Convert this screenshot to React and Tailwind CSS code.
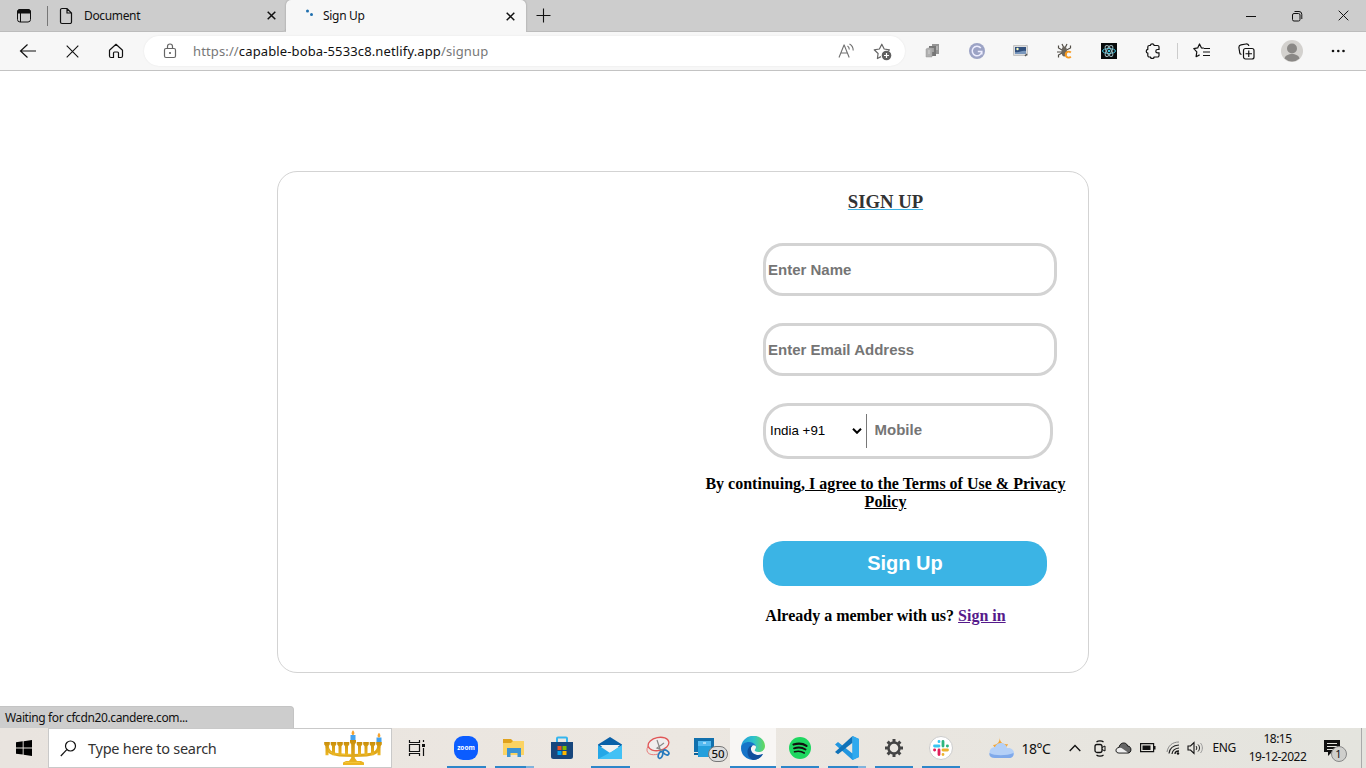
import React from "react";

const Ic = ({ s = 20, w, h, vb, children, className = "" }) => (
  <svg
    width={w || s}
    height={h || s}
    viewBox={vb || `0 0 ${w || s} ${h || s}`}
    fill="none"
    stroke="none"
    className={`block shrink-0 ${className}`}
  >
    {children}
  </svg>
);

const Slot = ({ className = "", children }) => (
  <div className={`flex shrink-0 items-center justify-center ${className}`}>{children}</div>
);

const Cross = ({ s = 9, sw = 1.5 }) => (
  <Ic s={s}>
    <path d={`M.7 .7L${s - 0.7} ${s - 0.7}M${s - 0.7} .7L.7 ${s - 0.7}`} stroke="#111" strokeWidth={sw} />
  </Ic>
);

function TabStrip() {
  return (
    <div className="flex h-8 bg-[#cdcdcd] text-[12px] text-[#111]">
      <div className="flex h-8 w-[286px] items-center rounded-br-[4px] border-b border-[#bcbcbc]">
        <Ic w={16} h={16} className="mt-px ml-4">
          <rect x="1.5" y="1.5" width="13" height="12.5" rx="2.5" stroke="#111" />
          <path d="M1.5 5V4a2.5 2.5 0 0 1 2.5-2.5h8A2.5 2.5 0 0 1 14.500 4v1z" fill="#111" stroke="#111" />
          <path d="M4.500 5v9" stroke="#111" />
        </Ic>
        <div className="ml-[15px] h-5 w-px bg-[#777]" />
        <Ic w={14} h={18} className="ml-[11px]">
          <path d="M1.500 3a1.500 1.500 0 0 1 1.500-1.500h5L12.500 6v9a1.500 1.500 0 0 1-1.500 1.500H3A1.500 1.500 0 0 1 1.500 15zM8 1.500V6h4.500" stroke="#111" strokeWidth="1.200" />
        </Ic>
        <span className="ml-[11px] w-[183px] leading-4 tracking-[-0.350px]">Document</span>
        <Cross />
      </div>
      <div className="flex h-8 w-60 items-center rounded-t-[5px] bg-[#f7f7f7] shadow-[0_0_2px_rgba(0,0,0,0.3)]">
        <Ic w={12} h={16} className="mb-[3px] ml-[17px]">
          <circle cx="4.500" cy="4" r="1.500" fill="#1f6fae" />
          <circle cx="8.500" cy="7.500" r="1.500" fill="#1f6fae" />
        </Ic>
        <span className="ml-[8px] w-[183px] leading-4 tracking-[-0.300px]">Sign Up</span>
        <Cross />
      </div>
      <div className="flex h-8 flex-1 items-center border-b border-[#bcbcbc]">
        <Ic w={15} h={15} className="ml-[10px]">
          <path d="M7.500 .5v14M.5 7.500h14" stroke="#111" strokeWidth="1.100" />
        </Ic>
        <div className="ml-auto flex">
          <Slot className="w-[46px]">
            <Ic s={10}><path d="M0 5.500h10" stroke="#111" /></Ic>
          </Slot>
          <Slot className="w-[46px]">
            <Ic s={12}>
              <rect x="1.500" y="3.500" width="7.500" height="7.500" rx="1.500" stroke="#111" />
              <path d="M3.500 1.500H8A2.800 2.800 0 0 1 10.800 4.300V9" stroke="#111" />
            </Ic>
          </Slot>
          <Slot className="w-[46px]"><Cross s={11} sw={1} /></Slot>
        </div>
      </div>
    </div>
  );
}

function Toolbar() {
  return (
    <div className="flex h-[39px] items-center border-b border-[#c3c3c3] bg-[#f7f7f7] pl-1.5">
      <Slot className="w-11">
        <Ic w={18} h={16}><path d="M8.500 1.500L1.500 8l7 6.500M1.500 8H17" stroke="#111" strokeWidth="1.200" /></Ic>
      </Slot>
      <Slot className="w-11"><Cross s={13} sw={1.1} /></Slot>
      <Slot className="w-11">
        <Ic s={16}>
          <path d="M1.500 7.200L8 1.300l6.500 5.900V13a1.500 1.500 0 0 1-1.500 1.500h-2.500V10a1 1 0 0 0-1-1h-3a1 1 0 0 0-1 1v4.500H3A1.500 1.500 0 0 1 1.500 13z" stroke="#111" strokeWidth="1.200" strokeLinejoin="round" />
        </Ic>
      </Slot>
      <div className="ml-1.5 flex h-[30px] w-[761px] items-center rounded-full bg-white shadow-[0_0_2px_rgba(0,0,0,0.08)]">
        <Ic w={14} h={16} className="ml-[19px]">
          <rect x="1.500" y="5.500" width="11" height="9" rx="1.500" stroke="#666" strokeWidth="1.200" />
          <path d="M4.500 5.500v-2a2.500 2.500 0 0 1 5 0v2" stroke="#666" strokeWidth="1.200" />
          <circle cx="7" cy="10" r="1" fill="#555" />
        </Ic>
        <span className="ml-4 w-[645px] whitespace-nowrap text-[13px] leading-5 tracking-[0.130px] text-[#777]">
          https://<span className="text-[#111]">capable-boba-5533c8.netlify.app</span>/signup
        </span>
        <Ic w={17} h={16}>
          <path d="M1 14.500L6 2h.2l5 12.500M2.800 10h6.600" stroke="#707070" strokeWidth="1.100" />
          <path d="M9.500 3c1.300.8 1.800 2 1.800 3.600M11.500 1c2.300 1.200 3.700 3.400 3.700 6.600" stroke="#707070" strokeWidth="1.100" />
        </Ic>
        <Ic w={19} h={19} className="ml-[18px]">
          <path d="M8 14.600L4.400 16.500l.7-5L1.200 7.800l5.200-.8L8.800 2.200 11.200 7l5.200.8-1.200 1.200" stroke="#666" strokeWidth="1.200" strokeLinejoin="round" />
          <circle cx="13.500" cy="13.500" r="4.800" fill="#606060" />
          <path d="M13.500 11v5M11 13.500h5" stroke="#fff" strokeWidth="1.200" />
        </Ic>
      </div>
      <Slot className="ml-1.5 w-11">
        <Ic s={16}>
          <path d="M7 1h7v10H7z" fill="#969696" /><path d="M4 3h7v10H4z" fill="#777" />
          <path d="M1 6l2-1h4v9H1z" fill="#b0b0b0" stroke="#999" strokeWidth=".5" />
          <path d="M4 7v4M8 5v4M12 3v4" stroke="#ddd" strokeWidth=".8" />
        </Ic>
      </Slot>
      <Slot className="w-11">
        <Ic s={16}>
          <circle cx="8" cy="8" r="8" fill="#9ca3c5" />
          <path d="M11.800 5a4.800 4.800 0 1 0 1 3.500H8.800M12.800 8.500v3" stroke="#eef" strokeWidth="1.500" />
        </Ic>
      </Slot>
      <Slot className="w-11">
        <Ic w={16} h={14}>
          <path d="M.5 1.500h14v10H.5z" fill="#ddd" stroke="#c4c4c4" />
          <path d="M2 3h11v7H2z" fill="#31507e" /><path d="M2 8c4 1 7-2 11-1v3H2z" fill="#7997bd" />
          <circle cx="4.500" cy="5" r="1.200" fill="#ffb" /><path d="M12 12l2-2" stroke="#555" strokeWidth="1.500" />
        </Ic>
      </Slot>
      <Slot className="w-11">
        <Ic s={16}>
          <path d="M5 1l1.500 3M10 1L8.500 4M1.500 2.500v2.500L5 7M13.500 2.500V5L9.500 7M0 9h5M1.500 14.500V12L5 10M9 8.500h4" stroke="#514d46" strokeWidth="1.200" />
          <ellipse cx="7.300" cy="8.500" rx="2.700" ry="5" fill="#6a655d" />
          <path d="M13.800 9.500a3 3 0 1 0 0 4.200" stroke="#f99a1d" strokeWidth="1.900" />
        </Ic>
      </Slot>
      <Slot className="w-11">
        <Ic s={16}>
          <path d="M0 0h16v16H0z" fill="#080b0c" />
          <g strokeWidth="1">
            <ellipse cx="8" cy="8" rx="6.500" ry="2.500" stroke="#3cc3df" />
            <ellipse cx="8" cy="8" rx="6" ry="2.500" stroke="#9fb8bd" transform="rotate(60 8 8)" />
            <ellipse cx="8" cy="8" rx="6" ry="2.500" stroke="#9fb8bd" transform="rotate(120 8 8)" />
          </g>
          <circle cx="8" cy="8" r="1.300" fill="#3cc3df" />
        </Ic>
      </Slot>
      <Slot className="w-11">
        <Ic s={16}>
          <path d="M5.300 2.500A2 2 0 0 1 9.200 2.500H12.500a1.500 1.500 0 0 1 1.500 1.500v2.500H12.500a1.700 1.700 0 0 0 0 3.400H14V12.500a1.500 1.500 0 0 1-1.500 1.500H9.200a2 2 0 0 1-3.900 0H4.300A1.500 1.500 0 0 1 2.800 12.500V10.200a2 2 0 0 1 0-3.900V4a1.500 1.500 0 0 1 1.500-1.500z" stroke="#111" strokeWidth="1.200" />
        </Ic>
      </Slot>
      <div className="ml-[2px] h-4 w-px bg-[#ccc]" />
      <Slot className="ml-[2px] w-11">
        <Ic w={18} h={16}>
          <path d="M10.800 5.200L8.500 4.900 6.500 1 4.700 4.900.8 5.700l3 3.200-.7 4.800 3.500-1.800M11 5.500h6M10 9h7M10 12.500h7" stroke="#111" strokeWidth="1.200" strokeLinejoin="round" />
        </Ic>
      </Slot>
      <Slot className="w-11">
        <Ic w={17} h={17}>
          <path d="M3.500 11.500A2.500 2.500 0 0 1 1.600 9L.9 4.500A2.500 2.500 0 0 1 3 1.900L8 1a2.500 2.500 0 0 1 2.900 2" stroke="#111" strokeWidth="1.200" />
          <rect x="5.500" y="5.500" width="10.500" height="10.500" rx="2" fill="#f7f7f7" stroke="#111" strokeWidth="1.200" />
          <path d="M10.750 7.500v6.500M7.500 10.750H14" stroke="#111" strokeWidth="1.200" />
        </Ic>
      </Slot>
      <Slot className="ml-[2px] w-11">
        <Ic s={22}>
          <circle cx="11" cy="11" r="11" fill="#d3d1ce" />
          <circle cx="11" cy="8.500" r="5" fill="#8a8886" />
          <path d="M3.500 18.500c1-6 14-6 15 0A11 11 0 0 1 3.500 18.500z" fill="#8a8886" />
        </Ic>
      </Slot>
      <Slot className="ml-[2px] w-11">
        <Ic w={14} h={4}><g fill="#111"><circle cx="2" cy="2" r="1.300" /><circle cx="7.300" cy="2" r="1.300" /><circle cx="12.500" cy="2" r="1.300" /></g></Ic>
      </Slot>
    </div>
  );
}

function SignUpCard() {
  const field =
    "block h-[53px] w-[294px] rounded-[20px] border-[3px] border-[#d3d3d3] bg-white px-[2px] font-['Liberation_Sans',Arial,sans-serif] text-[15px] font-bold placeholder:text-[#757575]";
  return (
    <main className="flex h-[657px] flex-col bg-white pt-[100px] font-['Liberation_Serif',serif]">
      <section className="ml-[277px] flex h-[502px] w-[812px] justify-end rounded-[20px] border border-[#d3d3d3]">
        <form className="w-[405px]">
          <h1 className="mt-[18px] text-center text-[18.700px] leading-6 font-bold text-[#333] underline decoration-[#3bb4e5] decoration-1">SIGN UP</h1>
          <div className="mt-[29px] ml-[80px] flex flex-col gap-[27px]">
            <input className={field} placeholder="Enter Name" />
            <input className={field} placeholder="Enter Email Address" />
            <div className="flex h-[56px] w-[290px] items-center rounded-[25px] border-[3px] border-[#d3d3d3] font-['Liberation_Sans',Arial,sans-serif]">
              <div className="flex h-[34px] w-[101px] items-center justify-between border-r border-[#777] pr-1 pl-1 text-[13.333px] text-black">
                India +91
                <Ic w={10} h={6}><path d="M1 .8l4 4 4-4" stroke="#000" strokeWidth="2" /></Ic>
              </div>
              <input className="mb-[2px] w-40 pl-[7.5px] text-[15px] font-bold placeholder:text-[#757575]" placeholder="Mobile" />
            </div>
          </div>
          <p className="mt-[16px] text-center text-[16px] leading-[18px] font-bold whitespace-nowrap text-black">
            By continuing<span className="underline">, I agree to the Terms of Use &amp; Privacy<br />Policy</span>
          </p>
          <button type="button" className="mt-[30px] ml-[80px] block h-[45px] w-[284px] rounded-[20px] bg-[#3bb4e5] pb-[2px] font-['Liberation_Sans',Arial,sans-serif] text-[20px] font-bold text-white">Sign Up</button>
          <p className="mt-[21px] text-center text-[16px] leading-[18px] font-bold text-black">
            Already a member with us? <a className="text-[#551a8b] underline">Sign in</a>
          </p>
        </form>
      </section>
      <div className="mt-auto flex h-[22px] w-[294px] items-center rounded-tr-[4px] border-t border-r border-[#c4c4c4] bg-[#cdcdcd] pl-[5px] font-['Noto_Sans',sans-serif] text-[12px] text-[#111]">
        <span className="tracking-[-0.380px] whitespace-nowrap">Waiting for cfcdn20.candere.com...</span>
      </div>
    </main>
  );
}

const Task = ({ className = "w-12", bar = "", children }) => (
  <div className={`flex h-10 shrink-0 flex-col items-center ${className}`}>
    <div className="flex h-[38px] items-center justify-center pt-[2px]">{children}</div>
    <div className={`h-[2px] ${bar}`} />
  </div>
);

function Menorah() {
  return (
    <Ic w={58} h={36}>
      <defs>
        <linearGradient id="gold" x1="0" x2="0" y1="0" y2="1"><stop stopColor="#c98e0b" /><stop offset="1" stopColor="#eeb824" /></linearGradient>
      </defs>
      <path d="M3 14c0 9 4 11.500 26 11.500S55 23 55 14" stroke="#dfa81a" strokeWidth="3.200" />
      <path d="M3.500 17c1 6 4 7.500 25.500 7.500" stroke="#f3c638" />
      <g fill="url(#gold)">
        {[3, 9.5, 16, 22.5, 35.5, 42, 48.5, 55].map((x) => <path key={x} d={`M${x - 2.8} 12h5.600v2.500l-1.300 1.800v9h-3v-9l-1.300-1.800z`} />)}
        <path d="M26 10h6v2.500l-1.200 2V28l2.200 3h4l3 1.500V35H19v-2.500L22 31h3l2.200-3V14.500L26 12.500z" />
      </g>
      <path d="M21 32.500h15" stroke="#f3c638" />
      <path d="M26.500 5h5v5h-5zM52.500 7.500h5v4.500h-5z" fill="#45a2ed" />
      <path d="M29 .2c2.600 3 1 4.800 0 4.800s-2.600-2 0-4.800zM55 2.700c2.600 3 1 4.800 0 4.800s-2.600-2 0-4.800z" fill="#f6a32f" />
    </Ic>
  );
}

function Taskbar() {
  return (
    <footer className="flex h-10 items-center bg-linear-to-r from-[#e9e4df] via-[#ece7e1] to-[#e4e4de] text-[#111]">
      <Slot className="w-12">
        <Ic s={16}><path d="M0 2.300L6.700 1.300v6.200H0zM7.600 1.200L16 0v7.500H7.600zM0 8.400h6.700v6.200L0 13.700zM7.600 8.400H16V16l-8.400-1.200z" fill="#000" /></Ic>
      </Slot>
      <div className="flex h-10 w-[344px] items-center border border-[#c9c9c9] bg-white">
        <Ic w={17} h={17} className="ml-[11px]"><circle cx="10.500" cy="6" r="5" stroke="#111" strokeWidth="1.200" /><path d="M6.800 9.700L.8 16" stroke="#111" strokeWidth="1.200" /></Ic>
        <span className="mt-px ml-[11px] w-[236px] text-[14.500px] tracking-[-0.260px] whitespace-nowrap text-[#333]">Type here to search</span>
        <Menorah />
      </div>
      <Slot className="w-[50px]">
        <Ic w={18} h={16}>
          <path d="M1.500 0v2.500h10V0M1.500 16v-2.500h10V16M1.500 4.500h10v7h-10zM15.500 0v2M15.500 8v8" stroke="#111" strokeWidth="1.200" />
          <path d="M14 4h3v3h-3z" fill="#111" />
        </Ic>
      </Slot>
      <Task bar="w-[39px] bg-[#2e86c9]">
        <Ic s={24}>
          <rect width="24" height="24" rx="9" fill="#0b5cff" />
          <text x="12" y="14" textAnchor="middle" fontFamily="Open Sans, sans-serif" fontWeight="700" fontSize="6.500" fill="#fff">zoom</text>
        </Ic>
      </Task>
      <Task bar="w-[39px] bg-linear-to-r from-[#2e86c9] from-80% to-[#7fb3dd] to-80%">
        <Ic w={22} h={20}>
          <path d="M0 1h8l2 2h10a1 1 0 0 1 1 1v13H0z" fill="#e0a21c" />
          <path d="M0 5h8l2-2h11v14H0z" fill="#fbd362" />
          <path d="M4 19v-9h14v9h-3.500v-4h-7v4z" fill="#3c93d4" />
        </Ic>
      </Task>
      <Task>
        <Ic w={24} h={24}>
          <path d="M7 7V2.500a1 1 0 0 1 1-1h8a1 1 0 0 1 1 1V7" stroke="#35b5ee" strokeWidth="2" />
          <path d="M1 6h22v14.500a2.500 2.500 0 0 1-2.500 2.500h-17A2.500 2.500 0 0 1 1 20.500z" fill="#17467c" />
          <path d="M7.500 10H11.500v4H7.500z" fill="#f25022" /><path d="M12.500 10h4v4h-4z" fill="#7fba00" />
          <path d="M7.500 15h4v4h-4z" fill="#00a4ef" /><path d="M12.500 15h4v4h-4z" fill="#ffb900" />
        </Ic>
      </Task>
      <Task bar="w-[39px] bg-[#2e86c9]">
        <Ic w={24} h={22}>
          <path d="M0 7.500L12 0l12 7.500V10H0z" fill="#0960a8" />
          <path d="M2 8h20l-9 8h-2z" fill="#f1f1f1" />
          <path d="M0 8l12 8 12-8v14H0z" fill="#24a7e7" /><path d="M0 22L15 14l9-6v14z" fill="#42c1f5" />
        </Ic>
      </Task>
      <Task>
        <Ic w={24} h={24}>
          <ellipse cx="12.500" cy="8" rx="10.500" ry="6.500" transform="rotate(-12 12.500 8)" fill="#f0eeee" stroke="#e05656" strokeWidth="1.300" />
          <path d="M2 10c-4 8 4 10 10 8" stroke="#e87c7c" />
          <path d="M11 4l4 12M18 7l-7 5 7 3" stroke="#888" strokeWidth="1.200" />
          <ellipse cx="14.500" cy="19" rx="2" ry="3.500" transform="rotate(20 14.500 19)" stroke="#2679bd" strokeWidth="1.700" />
          <ellipse cx="20" cy="16.500" rx="3.200" ry="2" transform="rotate(35 20 16.500)" stroke="#2679bd" strokeWidth="1.700" />
        </Ic>
      </Task>
      <Task>
        <div className="relative h-6 w-6">
          <Ic s={24}>
            <path d="M0 2h2v0h18v14H0z" fill="#1170ad" /><path d="M0 17h16v4H4v-2H0z" fill="#0b6199" />
            <rect x="4" y="5" width="13" height="16" rx="1" fill="#249fdc" /><path d="M4 5h13v5H4z" fill="#55baf0" /><path d="M9 7h3" stroke="#fff" />
          </Ic>
          <span className="absolute top-[10px] left-[14px] flex h-[16px] w-[20px] items-center justify-center rounded-full border border-[#777] bg-[#dcdcdc] text-[11.500px] font-medium">50</span>
        </div>
      </Task>
      <Task className="w-[46px] bg-[#f8f6f4]" bar="w-full bg-[#2e86c9]">
        <Ic s={24}>
          <defs>
            <linearGradient id="edgeTop" x1="0" x2="1"><stop stopColor="#239bdc" /><stop offset=".55" stopColor="#30c4c9" /><stop offset="1" stopColor="#66d957" /></linearGradient>
          </defs>
          <path d="M0 12C1-4 23-4 24 10c0 6-7 7-10 5-1-1 1-2 1-4C14 6 4 5 0 12z" fill="url(#edgeTop)" />
          <path d="M0 12C1 5 12 4 15 10c-4-2-6 1-5 4 1 5 8 6 12 4-3 5-8 7-13 5.500C4 22 0 18 0 12z" fill="#1674c8" />
          <path d="M9 10c-5 5-2 12.500 3 13.900C18 24 21 20 22 18c-5 2-11 1-12-4-.5-2 .5-4 2-4.500z" fill="#0f4f9c" />
        </Ic>
      </Task>
      <Task className="ml-[0.5px] w-[47px]" bar="w-[38px] bg-[#2e86c9]">
        <Ic s={22}>
          <circle cx="11" cy="11" r="11" fill="#1ed760" />
          <g stroke="#111" strokeLinecap="round"><path d="M4.500 7.500c5-1.500 9.500-1 13 1.300" strokeWidth="2.200" /><path d="M5 11.300c4-1.300 8.500-.8 11.500 1.200" strokeWidth="1.900" /><path d="M5.500 14.800c3.500-1 7-.6 9.800 1.200" strokeWidth="1.500" /></g>
        </Ic>
      </Task>
      <Task className="w-[47px]" bar="w-[38px] bg-linear-to-r from-[#2e86c9] from-80% to-[#7fb3dd] to-80%">
        <Ic s={24}>
          <path d="M17.500 0L24 3v18l-6.500 3L0 8.500 3 6l14.500 11.500z" fill="#2196e0" />
          <path d="M17.500 0v6.800L3 18.300 0 16z" fill="#1072b8" />
          <path d="M17.500 0L24 3v18l-6.500 3z" fill="#2fa9ee" />
        </Ic>
      </Task>
      <Task className="w-[47px]" bar="w-[38px] bg-[#2e86c9]">
        <Ic s={20}>
          <circle cx="10" cy="10" r="5.500" stroke="#444" strokeWidth="2.500" />
          {[0, 45, 90, 135, 180, 225, 270, 315].map((a) => <path key={a} d="M10 4V1" stroke="#444" strokeWidth="3" transform={`rotate(${a} 10 10)`} />)}
        </Ic>
      </Task>
      <Task className="w-[47px]" bar="w-[38px] bg-[#2e86c9]">
        <Ic s={24}>
          <circle cx="12" cy="12" r="11.500" fill="#fff" stroke="#ccc" />
          <g strokeWidth="2.800" strokeLinecap="round">
            <path d="M10 10H5.500M10 5.500v.2" stroke="#36c5f0" /><path d="M14 5.500V10M18.300 10h.2" stroke="#2eb67d" />
            <path d="M14 14h4.500M14 18.300v.2" stroke="#ecb22e" /><path d="M10 14v4.500M5.700 14h-.2" stroke="#e01e5a" />
          </g>
        </Ic>
      </Task>
      <Ic w={26} h={24} className="ml-[24px]">
        <path d="M11 0c-1 6 3 9 8 8-2 7-12 7-15 1 5 0 7-4 7-9z" fill="#f4a533" />
        <path d="M6 22a5.500 5.500 0 0 1 0-11c2-6 11-5 12 1 9-1 9 10 2 10z" fill="#b4d0f7" />
        <path d="M6 22c-5 0-6-3-5.500-5 5 3 17 3 24 0 .5 3-1.500 5-4.500 5z" fill="#7fa9ea" />
      </Ic>
      <span className="ml-[7px] w-[31px] text-[14px] tracking-[-0.500px] whitespace-nowrap">18°C</span>
      <Ic w={12} h={8} className="ml-[16px]"><path d="M.7 7L6 1.500 11.300 7" stroke="#111" strokeWidth="1.300" /></Ic>
      <Ic w={12} h={17} className="ml-[13px]">
        <path d="M2.500 2C4 .5 8 .5 9.500 2M2.500 15c1.500 1.500 5.500 1.500 7 0" stroke="#111" strokeWidth="1.100" />
        <rect x="1" y="4.500" width="7" height="8" rx="2" stroke="#111" strokeWidth="1.300" /><path d="M8 7.500L11 6v5L8 9.500" stroke="#111" />
      </Ic>
      <Ic w={17} h={12} className="ml-[9px]">
        <path d="M4 11C0 11 0 6 4 5.500 5-.5 12 0 12.500 4c4.500 0 4.500 7 .5 7z" fill="#666" stroke="#111" />
        <path d="M4 10.500C.5 10.500 1 6 4 6c1.500-.5 2.500 0 4 1l5 3.500z" fill="#eee" />
      </Ic>
      <Ic w={16} h={10} className="ml-[8px]"><path d="M.6.600h13v8H.6z" stroke="#111" strokeWidth="1.200" /><path d="M2.500 2.500h8v4.500h-8zM14 3h1.500v3.500H14z" fill="#111" /></Ic>
      <Ic w={14} h={14} className="ml-[10px]">
        <path d="M1 11C2 5 6 1 13 1" stroke="#888" /><path d="M3 12.500c.5-5 4-8 10-8.500M6 13c.4-3.500 3-5.500 7-6" stroke="#222" strokeWidth="1.200" /><path d="M9 13c0-2 2-3 4-3" stroke="#111" strokeWidth="1.300" /><circle cx="12" cy="12.500" r="1.200" fill="#111" />
      </Ic>
      <Ic w={18} h={14} className="ml-[7px]">
        <path d="M1 5h2.500L7 1.500v11L3.500 9H1z" stroke="#111" strokeWidth="1.100" /><path d="M9 5c1 1 1 3 0 4M11 3.500c2 2 2 5 0 7" stroke="#222" /><path d="M13.500 2c2.500 3 2.500 7 0 10" stroke="#999" />
      </Ic>
      <span className="ml-[8px] w-[24px] text-[12px] tracking-[-0.400px]">ENG</span>
      <div className="ml-[10px] w-[62px] text-center text-[12px] leading-[18px] tracking-[-0.500px] whitespace-nowrap">
        <div>18:15</div>
        <div>19-12-2022</div>
      </div>
      <div className="relative ml-[14px] h-6 w-6">
        <Ic w={24} h={24}><path d="M1 4h16v12H9l-4 4v-4H1z" fill="#111" /><path d="M4 7.500h10M4 10.500h10M4 13.500h7" stroke="#e4e4de" /></Ic>
        <span className="absolute top-[10px] left-[8px] flex h-[16px] w-[16px] items-center justify-center rounded-full border border-[#888] bg-[#cfcfcc] text-[11px]">1</span>
      </div>
      <div className="mr-1 ml-auto h-10 w-px bg-[#aaa]" />
    </footer>
  );
}

export default function App() {
  return (
    <div className="flex h-[768px] w-[1366px] flex-col overflow-hidden bg-white font-['Noto_Sans',sans-serif]">
      <TabStrip />
      <Toolbar />
      <SignUpCard />
      <Taskbar />
    </div>
  );
}
